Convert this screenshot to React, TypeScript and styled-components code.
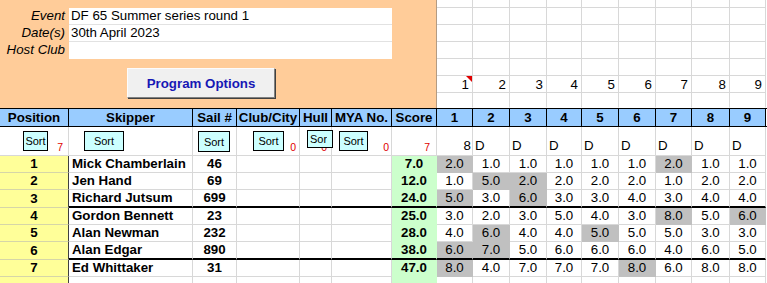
import React from "react";
import styled, { createGlobalStyle, css } from "styled-components";

const COLS =
  "69px 124px 44px 63px 32px 60px 45px 36px 37px 37px 35px 37px 37px 36px 38px 36px";
const RACE_COLS = "36px 37px 37px 35px 37px 37px 36px 38px 36px";
const GRID = "#d8d8d8";

const GlobalStyle = createGlobalStyle`
  html, body { margin: 0; padding: 0; background: #fff; overflow: hidden; }
  body {
    font-family: "Liberation Sans", Arial, sans-serif;
    font-size: 13.3px;
    color: #000;
  }
  * { box-sizing: border-box; }
`;

const Sheet = styled.div`
  width: 767px;
`;

/* ---------- top area ---------- */
const Top = styled.div`
  display: flex;
  height: 108px;
`;

const InfoPanel = styled.div`
  flex: 0 0 437px;
  background: #ffcc99;
  border-right: 1px solid #b39b83;
  padding-top: 8px;
  display: flex;
  flex-direction: column;
`;

const EventForm = styled.div`
  display: grid;
  grid-template-columns: 69px 323px;
  grid-auto-rows: 17px;
`;

const FieldLabel = styled.div`
  font-style: italic;
  text-align: right;
  padding-right: 4px;
  line-height: 16px;
  white-space: nowrap;
`;

const FieldValue = styled.div<{ $last?: boolean }>`
  background: #fff;
  padding-left: 2px;
  line-height: 16px;
  border-bottom: 1px solid ${(p) => (p.$last ? "#fff" : "#e2e2e2")};
  white-space: nowrap;
`;

const OptionsButton = styled.button`
  margin: 9px 0 0 127px;
  width: 148px;
  height: 30px;
  padding: 0;
  background: #f0f0f0;
  border: 1px solid;
  border-color: #fcfcfc #808080 #808080 #fcfcfc;
  box-shadow: 1px 1px 0 #404040;
  font-family: "Liberation Sans", Arial, sans-serif;
  font-size: 13.3px;
  font-weight: bold;
  color: #1717b5;
`;

const RaceNumbers = styled.div`
  flex: 1;
  display: grid;
  grid-template-columns: ${RACE_COLS};
  grid-template-rows: 8px 17px 17px 17px 17px 17px 15px;
`;

const NumCell = styled.div<{ $last?: boolean; $note?: boolean }>`
  position: relative;
  border-right: 1px solid ${GRID};
  border-bottom: 1px solid ${(p) => (p.$last ? "transparent" : GRID)};
  text-align: right;
  padding-right: 3px;
  line-height: 17px;
  ${(p) =>
    p.$note &&
    css`
      &::after {
        content: "";
        position: absolute;
        top: 0;
        right: 0;
        border-top: 6px solid #e00000;
        border-left: 6px solid transparent;
      }
    `}
`;

/* ---------- table ---------- */
const HeaderRow = styled.div`
  display: grid;
  grid-template-columns: ${COLS};
  height: 19px;
  border-top: 1px solid #000;
  border-bottom: 1px solid #000;
`;

const HeaderCell = styled.div`
  background: #99ccff;
  border-right: 1px solid #000;
  font-weight: bold;
  text-align: center;
  line-height: 17px;
  white-space: nowrap;
  overflow: hidden;
`;

const SortRow = styled.div`
  display: grid;
  grid-template-columns: ${COLS};
  height: 29px;
`;

const SortCell = styled.div<{ $align?: "left" | "right"; $pad?: number }>`
  position: relative;
  display: flex;
  align-items: flex-end;
  justify-content: ${(p) => (p.$align === "left" ? "flex-start" : "flex-end")};
  padding: 0 ${(p) => (p.$align === "left" ? 0 : p.$pad ?? 3)}px 1px
    ${(p) => (p.$align === "left" ? 2 : 0)}px;
  border-right: 1px solid ${GRID};
  border-bottom: 1px solid ${GRID};
  white-space: nowrap;
`;

const Count = styled.span`
  color: #e00000;
  font-size: 10.5px;
  line-height: 13px;
`;

const SortNote = styled.span`
  line-height: 16px;
`;

const SortButton = styled.button<{ $x: number; $y: number; $w: number; $h: number }>`
  position: absolute;
  left: ${(p) => p.$x}px;
  top: ${(p) => p.$y}px;
  width: ${(p) => p.$w}px;
  height: ${(p) => p.$h}px;
  padding: 0;
  display: flex;
  align-items: center;
  justify-content: center;
  background: #ccffff;
  border: 1px solid #000;
  font-family: "Liberation Sans", Arial, sans-serif;
  font-size: 11px;
  color: #000;
  overflow: hidden;
  white-space: nowrap;
`;

const ClippedLabel = styled.span`
  display: block;
  width: 17px;
  overflow: hidden;
  margin-right: 3px;
  text-align: left;
`;

const DataRow = styled.div<{ $thick?: boolean }>`
  display: grid;
  grid-template-columns: ${COLS};
  height: ${(p) => (p.$thick ? 18 : 17)}px;
`;

const BaseCell = styled.div<{ $thick?: boolean }>`
  display: flex;
  align-items: center;
  line-height: 16px;
  white-space: nowrap;
  overflow: hidden;
  border-right: 1px solid ${GRID};
  border-bottom: ${(p) => (p.$thick ? `2px solid #000` : `1px solid ${GRID}`)};
`;

const PosCell = styled(BaseCell)`
  background: #ffff99;
  font-weight: bold;
  justify-content: center;
  border-right: 1px solid #404040;
  border-bottom: 1px solid #d6d6a8;
`;

const NameCell = styled(BaseCell)`
  font-weight: bold;
  padding-left: 3px;
`;

const SailCell = styled(BaseCell)`
  font-weight: bold;
  justify-content: center;
`;

const ScoreCell = styled(BaseCell)`
  background: #ccffcc;
  font-weight: bold;
  justify-content: center;
  border-right-color: #ccffcc;
  ${(p) => !p.$thick && css`border-bottom-color: #ccffcc;`}
`;

const RaceCell = styled(BaseCell)<{ $discard?: boolean }>`
  justify-content: center;
  ${(p) =>
    p.$discard &&
    css`
      background: #c0c0c0;
      border-right-color: #c0c0c0;
      ${!p.$thick && css`border-bottom-color: #c0c0c0;`}
    `}
`;

type Entry = {
  pos: number;
  name: string;
  sail: string;
  score: string;
  races: number[];
  discards: number[];
  thick?: boolean;
};

const entries: Entry[] = [
  { pos: 1, name: "Mick Chamberlain", sail: "46", score: "7.0", races: [2, 1, 1, 1, 1, 1, 2, 1, 1], discards: [0, 6] },
  { pos: 2, name: "Jen Hand", sail: "69", score: "12.0", races: [1, 5, 2, 2, 2, 2, 1, 2, 2], discards: [1, 2] },
  { pos: 3, name: "Richard Jutsum", sail: "699", score: "24.0", races: [5, 3, 6, 3, 3, 4, 3, 4, 4], discards: [0, 2], thick: true },
  { pos: 4, name: "Gordon Bennett", sail: "23", score: "25.0", races: [3, 2, 3, 5, 4, 3, 8, 5, 6], discards: [6, 8] },
  { pos: 5, name: "Alan Newman", sail: "232", score: "28.0", races: [4, 6, 4, 4, 5, 5, 5, 3, 3], discards: [1, 4] },
  { pos: 6, name: "Alan Edgar", sail: "890", score: "38.0", races: [6, 7, 5, 6, 6, 6, 4, 6, 5], discards: [0, 1], thick: true },
  { pos: 7, name: "Ed Whittaker", sail: "31", score: "47.0", races: [8, 4, 7, 7, 7, 8, 6, 8, 8], discards: [0, 5] },
];

const headers = ["Position", "Skipper", "Sail #", "Club/City", "Hull", "MYA No.", "Score", "1", "2", "3", "4", "5", "6", "7", "8", "9"];
const raceIdx = [0, 1, 2, 3, 4, 5, 6, 7, 8];

export default function App() {
  return (
    <Sheet>
      <GlobalStyle />
      <Top>
        <InfoPanel>
          <EventForm>
            <FieldLabel>Event</FieldLabel>
            <FieldValue>DF 65 Summer series round 1</FieldValue>
            <FieldLabel>Date(s)</FieldLabel>
            <FieldValue>30th April 2023</FieldValue>
            <FieldLabel>Host Club</FieldLabel>
            <FieldValue $last />
          </EventForm>
          <OptionsButton>Program Options</OptionsButton>
        </InfoPanel>
        <RaceNumbers>
          {[0, 1, 2, 3, 4, 5, 6].map((r) =>
            raceIdx.map((c) => (
              <NumCell key={`${r}-${c}`} $last={r === 6} $note={r === 5 && c === 0}>
                {r === 5 ? c + 1 : ""}
              </NumCell>
            ))
          )}
        </RaceNumbers>
      </Top>

      <HeaderRow>
        {headers.map((h) => (
          <HeaderCell key={h}>{h}</HeaderCell>
        ))}
      </HeaderRow>

      <SortRow>
        <SortCell $pad={5}>
          <SortButton $x={23} $y={4} $w={25} $h={20}>Sort</SortButton>
          <Count>7</Count>
        </SortCell>
        <SortCell>
          <SortButton $x={15} $y={4} $w={40} $h={20}>Sort</SortButton>
        </SortCell>
        <SortCell>
          <SortButton $x={5} $y={4} $w={32} $h={21}>Sort</SortButton>
        </SortCell>
        <SortCell $pad={3}>
          <SortButton $x={16} $y={4} $w={31} $h={20}>Sort</SortButton>
          <Count>0</Count>
        </SortCell>
        <SortCell $pad={4}>
          <Count>0</Count>
          <SortButton $x={7} $y={3} $w={26} $h={18}>
            <ClippedLabel>Sort</ClippedLabel>
          </SortButton>
        </SortCell>
        <SortCell $pad={2}>
          <SortButton $x={7} $y={4} $w={29} $h={20}>Sort</SortButton>
          <Count>0</Count>
        </SortCell>
        <SortCell $pad={6}>
          <Count>7</Count>
        </SortCell>
        <SortCell $pad={1}>
          <SortNote>8</SortNote>
        </SortCell>
        {raceIdx.slice(1).map((c) => (
          <SortCell key={c} $align="left">
            <SortNote>D</SortNote>
          </SortCell>
        ))}
      </SortRow>

      {entries.map((e) => (
        <DataRow key={e.pos} $thick={e.thick}>
          <PosCell>{e.pos}</PosCell>
          <NameCell $thick={e.thick}>{e.name}</NameCell>
          <SailCell $thick={e.thick}>{e.sail}</SailCell>
          <BaseCell $thick={e.thick} />
          <BaseCell $thick={e.thick} />
          <BaseCell $thick={e.thick} />
          <ScoreCell $thick={e.thick}>{e.score}</ScoreCell>
          {e.races.map((v, i) => (
            <RaceCell key={i} $thick={e.thick} $discard={e.discards.includes(i)}>
              {v.toFixed(1)}
            </RaceCell>
          ))}
        </DataRow>
      ))}

      <DataRow>
        <PosCell />
        <BaseCell />
        <BaseCell />
        <BaseCell />
        <BaseCell />
        <BaseCell />
        <ScoreCell />
        {raceIdx.map((c) => (
          <RaceCell key={c} />
        ))}
      </DataRow>
    </Sheet>
  );
}
